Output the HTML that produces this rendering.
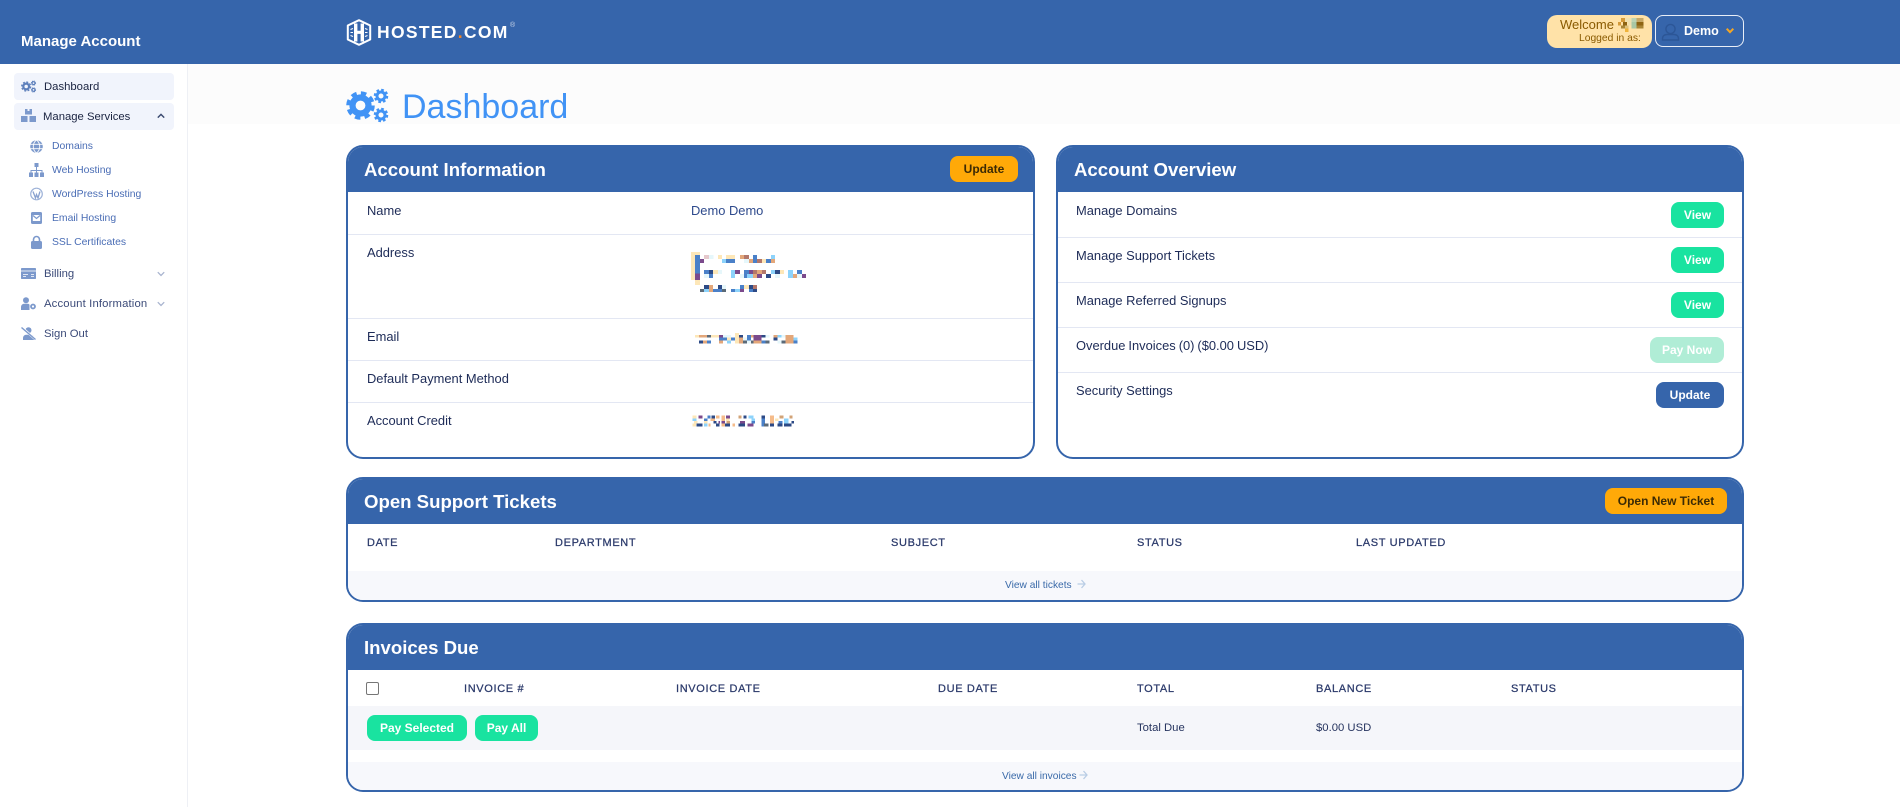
<!DOCTYPE html>
<html lang="en"><head><meta charset="utf-8"><title>Dashboard</title>
<style>
*{box-sizing:border-box;margin:0;padding:0}
html,body{width:1900px;height:807px;overflow:hidden;background:#fff;font-family:"Liberation Sans",sans-serif}
.a{position:absolute}
.t{position:absolute;white-space:nowrap;line-height:16px;margin-top:-7px;font-size:12.9px;color:#1d2b57}
.card{position:absolute;border:2px solid #3665ab;border-radius:17px;background:#fff;overflow:hidden}
.ch{position:absolute;left:-2px;right:-2px;top:-2px;background:#3665ab}
.ct{position:absolute;white-space:nowrap;color:#fff;font-weight:bold;font-size:18.6px;line-height:24px;left:16px;top:10px}
.line{position:absolute;height:1px;background:#e3e7f3}
.btn{position:absolute;border-radius:8px;text-align:center;font-weight:bold;font-size:12px;line-height:26px;height:26px;color:#fff;background:#19e3a0;white-space:nowrap}
.or{background:#ffa908;color:#3b2a05}
.h{font-size:11px;letter-spacing:.65px;color:#2b3a6b}
.hh{font-weight:normal;-webkit-text-stroke:.25px #2b3a6b}
.s1{font-size:11.3px;color:#26345f}
.s2{font-size:10.4px;color:#4a6db5}
.band{position:absolute;background:#f7f8fc;border-radius:0 0 15px 15px}
.ft{font-size:10.2px;color:#3a6aa9}
svg{position:absolute;overflow:visible}
.i{fill:#7c99cc}
</style></head><body>
<svg width="0" height="0" style="position:absolute"><defs>
<g id="gears">
<circle cx="14.500" cy="17.500" r="8" fill="none" stroke="currentColor" stroke-width="6.200"/>
<circle cx="14.500" cy="17.500" r="12.500" fill="none" stroke="currentColor" stroke-width="3.600" stroke-dasharray="5.500 4.320"/>
<circle cx="35" cy="8" r="4" fill="none" stroke="currentColor" stroke-width="3"/>
<circle cx="35" cy="8" r="6" fill="none" stroke="currentColor" stroke-width="2.500" stroke-dasharray="2.600 2.110"/>
<circle cx="35" cy="27" r="4" fill="none" stroke="currentColor" stroke-width="3"/>
<circle cx="35" cy="27" r="6" fill="none" stroke="currentColor" stroke-width="2.500" stroke-dasharray="2.600 2.110"/>
</g></defs></svg>

<!-- top bar -->
<div class="a" style="left:0;top:0;width:1900px;height:64px;background:#3665ab"></div>
<div class="t" style="left:21px;top:41px;color:#fff;font-weight:bold;font-size:15px">Manage Account</div>

<!-- logo -->
<svg style="left:346px;top:19px" width="27" height="27" viewBox="0 0 27 27">
<path d="M13 1.200 24.200 6.500V20.500L13 25.800 1.800 20.500V6.500Z" fill="none" stroke="#fff" stroke-width="2" stroke-linejoin="round"/>
<path d="M8 4.500h3.400v7.200h3.200V4.500H18v18h-3.400v-7.600h-3.200v7.600H8Z" fill="#fff"/>
<path d="M4.500 10.500 7 9.500M4.500 13.500h2.500M4.500 16.500l2.500 1M19 9.500l2.500 1M19 13.500h2.500M19 17.500l2.500-1" stroke="#fff" stroke-width="1.100" fill="none"/>
</svg>
<div class="t" style="left:377px;top:32px;color:#fff;font-size:17.500px;font-weight:bold;letter-spacing:1.300px;line-height:20px;margin-top:-10px">HOSTED<span style="color:#f58220">.</span>COM</div>
<div class="t" style="left:510px;top:25px;color:#cfd9ea;font-size:7px">®</div>

<!-- welcome -->
<div class="a" style="left:1547px;top:15px;width:105px;height:33px;background:#ffe2a8;border-radius:10px"></div>
<div class="t" style="left:1560px;top:24px;color:#8a5a00;font-size:13px">Welcome</div>
<div class="t" style="left:1579px;top:38px;color:#8a5a00;font-size:10.300px">Logged in as:</div>
<svg style="left:1618px;top:18px" width="25.300" height="14" viewBox="0 0 76 42" shape-rendering="crispEdges">
<path d="M9 0h12v12H9zM0 12h9v10H0z" fill="#d49a3a"/><path d="M21 0h20v12H21zM30 12h11v10H30z" fill="#f0e0ae"/><path d="M41 0h15v12H41z" fill="#bcd3b2"/><path d="M41 12h15v20H41z" fill="#a8c7a5"/><path d="M56 0h20v12H56z" fill="#c7a866"/><path d="M56 12h20v10H56zM15 12h12v10H15z" fill="#8e6412"/><path d="M56 22h20v10H56zM9 22h12v10H9z" fill="#a88536"/><path d="M21 22h10v10H21z" fill="#dcc07a"/><path d="M21 32h10v10H21z" fill="#f0b33a"/>
</svg>
<div class="a" style="left:1655px;top:15px;width:89px;height:32px;border:1.500px solid #e8eef8;border-radius:8px"></div>
<svg style="left:1661px;top:23px" width="19" height="18" viewBox="0 0 19 18" fill="none" stroke="#2c5697" stroke-width="1.400">
<circle cx="9.500" cy="6" r="4.600"/><path d="M1.500 17v-1.500c0-2.500 2-4 4.500-4h7c2.500 0 4.500 1.500 4.500 4V17z"/></svg>
<div class="t" style="left:1684px;top:30px;color:#fff;font-weight:bold;font-size:12.500px">Demo</div>
<svg style="left:1726px;top:28px" width="8" height="6" viewBox="0 0 8 6"><path d="M.7.700 4 4.200 7.300.7" fill="none" stroke="#f5a623" stroke-width="2"/></svg>

<!-- sidebar -->
<div class="a" style="left:187px;top:64px;width:1px;height:743px;background:#eef0f5"></div>
<div class="a" style="left:188px;top:64px;width:1712px;height:60px;background:#fcfcfc"></div>
<div class="a" style="left:14px;top:73px;width:160px;height:27px;background:#f1f4fc;border-radius:4px"></div>
<div class="a" style="left:14px;top:103px;width:160px;height:27px;background:#f1f4fc;border-radius:4px"></div>

<svg style="left:21px;top:80px;color:#5d7fbb" width="15" height="13" viewBox="0 0 42 35"><use href="#gears"/></svg>
<div class="t s1" style="left:44px;top:86px;color:#1a2340">Dashboard</div>
<svg style="left:21px;top:109px" width="15" height="13" viewBox="0 0 15 13"><path class="i" d="M4 0h2.500v2h2V0H11v5.500H4zM0 7h6.500v6H0zM8.500 7H15v6H8.500z"/></svg>
<div class="t s1" style="left:43px;top:116px;color:#1a2340">Manage Services</div>
<svg style="left:157px;top:113px" width="8" height="6" viewBox="0 0 8 6"><path d="M.8 4.600 4 1.400 7.200 4.600" fill="none" stroke="#3b4a70" stroke-width="1.500"/></svg>

<svg style="left:30px;top:140px" width="13" height="13" viewBox="0 0 12 12" fill="none"><circle cx="6" cy="6" r="5.800" fill="#7c99cc"/><path d="M0 4h12M0 8h12M6 0c-4 3-4 9 0 12M6 0c4 3 4 9 0 12" stroke="#fff" stroke-width=".8"/></svg>
<div class="t s2" style="left:52px;top:146px">Domains</div>
<svg style="left:29px;top:163px" width="15" height="14" viewBox="0 0 15 14"><path class="i" d="M5.500 0h4v4h-4zM7 4h1v3h5.500v2.500h-1V8h-4.500v1.500H7V8H2.500v1.500h-1V7H7zM0 9.500h4V14H0zM5.500 9.500h4V14h-4zM11 9.500h4V14h-4z"/></svg>
<div class="t s2" style="left:52px;top:170px">Web Hosting</div>
<svg style="left:30px;top:187px" width="13" height="14" viewBox="0 0 13 13"><circle cx="6.500" cy="6.500" r="5.800" fill="none" stroke="#9db2d8" stroke-width="1.200"/><path d="M3 4l2.500 6.500L6.500 7l1.500 3.500L10 4" fill="none" stroke="#8aa2cf" stroke-width="1.300"/></svg>
<div class="t s2" style="left:52px;top:194px">WordPress Hosting</div>
<svg style="left:31px;top:212px" width="11" height="12" viewBox="0 0 11 12"><rect width="11" height="12" rx="1.500" class="i"/><rect x="1.800" y="3" width="7.400" height="6" fill="#fff"/><path d="M2 3.500 5.500 6.500 9 3.500" fill="none" stroke="#7c99cc" stroke-width="1.200"/></svg>
<div class="t s2" style="left:52px;top:218px">Email Hosting</div>
<svg style="left:31px;top:236px" width="11" height="13" viewBox="0 0 11 13"><rect y="5" width="11" height="8" rx="1.500" class="i"/><path d="M2.500 6V3.500a3 3 0 0 1 6 0V6" fill="none" stroke="#7c99cc" stroke-width="1.600"/></svg>
<div class="t s2" style="left:52px;top:242px">SSL Certificates</div>

<svg style="left:21px;top:268px" width="15" height="11" viewBox="0 0 15 11"><rect width="15" height="11" class="i" rx=".8"/><path d="M0 3h15" stroke="#fff" stroke-width=".8"/><path d="M2 6.500h5M2 8.500h3M10 6.500h3M10 8.500h3" stroke="#fff" stroke-width=".8"/></svg>
<div class="t s1" style="left:44px;top:273px;color:#3b4a78">Billing</div>
<svg style="left:157px;top:271px" width="8" height="6" viewBox="0 0 8 6"><path d="M.8 1.200 4 4.400 7.200 1.200" fill="none" stroke="#a8b4cf" stroke-width="1.300"/></svg>
<svg style="left:21px;top:297px" width="15" height="13" viewBox="0 0 15 13"><circle cx="5" cy="3.200" r="3" class="i"/><path class="i" d="M0 13v-3c0-2 1.500-3.300 3.500-3.300h3c1 0 1.500.3 2 1V13z"/><circle cx="12" cy="9.500" r="2" fill="none" stroke="#7c99cc" stroke-width="1.800"/></svg>
<div class="t s1" style="left:44px;top:303px;color:#3b4a78;letter-spacing:.15px">Account Information</div>
<svg style="left:157px;top:301px" width="8" height="6" viewBox="0 0 8 6"><path d="M.8 1.200 4 4.400 7.200 1.200" fill="none" stroke="#a8b4cf" stroke-width="1.300"/></svg>
<svg style="left:21px;top:327px" width="15" height="13" viewBox="0 0 15 13"><circle cx="7.500" cy="3.200" r="3" class="i"/><path class="i" d="M2 13v-2c0-2 1.500-3.300 3.500-3.300h4c2 0 3.500 1.300 3.500 3.300v2z"/><path d="M1 .5 14 12" stroke="#fff" stroke-width="2.400"/><path d="M.5 .5 14.500 12.500" stroke="#7c99cc" stroke-width="1.400"/></svg>
<div class="t s1" style="left:44px;top:333px;color:#3b4a78">Sign Out</div>

<!-- title -->
<svg style="left:346px;top:88px;color:#4193f5" width="42" height="35" viewBox="0 0 42 35"><use href="#gears"/></svg>
<div class="t" style="left:402px;top:107px;font-size:34px;line-height:40px;margin-top:-20px;color:#4193f5">Dashboard</div>

<!-- Account information -->
<div class="card" style="left:346px;top:145px;width:689px;height:314px"><div class="ch" style="height:47px"><div class="ct" style="left:18px;top:13px">Account Information</div></div></div>
<div class="btn or" style="left:950px;top:156px;width:68px">Update</div>
<div class="line" style="left:348px;top:234px;width:685px"></div>
<div class="line" style="left:348px;top:318px;width:685px"></div>
<div class="line" style="left:348px;top:360px;width:685px"></div>
<div class="line" style="left:348px;top:402px;width:685px"></div>
<div class="t" style="left:367px;top:210px">Name</div>
<div class="t" style="left:691px;top:210px;color:#2e4a8c">Demo Demo</div>
<div class="t" style="left:367px;top:252px">Address</div>
<div class="t" style="left:367px;top:336px">Email</div>
<div class="t" style="left:367px;top:378px">Default Payment Method</div>
<div class="t" style="left:367px;top:420px">Account Credit</div>

<!-- pixelated -->
<svg style="left:660px;top:230px" width="200" height="220" viewBox="0 0 600 660" shape-rendering="crispEdges">
<path fill="#fde7b8" d="M93 66h12v84H93zM105 150h15v15h-15zM105 66h15v9h-15zM306 87h12v12h-12zM174 75h12v12h-12zM198 75h27v12h-27zM159 120h15v12h-15zM360 120h12v12h-12zM252 165h15v12h-15zM105 315h12v8h-12zM153 315h24v8h-24zM225 309h12v31h-12zM201 323h12v8h-12z"/>
<path fill="#4a80c8" d="M105 75h15v55h-15zM198 87h15v12h-15zM213 87h12v12h-12zM318 87h15v12h-15zM279 75h12v24h-12zM132 120h15v12h-15zM252 120h15v24h-15zM147 132h12v12h-12zM411 120h15v12h-15zM240 165h12v12h-12zM159 177h27v9h-27zM213 177h12v9h-12zM267 177h12v9h-12zM177 323h24v8h-24zM261 315h12v8h-12zM293 323h12v8h-12zM305 331h12v9h-12zM213 323h12v8h-12zM141 331h12v9h-12zM401 331h12v9h-12zM261 323h12v8h-12z"/>
<path fill="#8dd3fb" d="M333 75h12v12h-12zM186 87h12v12h-12zM213 120h12v24h-12zM333 120h12v12h-12zM384 120h15v24h-15zM267 132h12v12h-12zM132 177h15v9h-15zM225 177h15v9h-15zM353 315h12v8h-12zM201 331h12v9h-12zM401 323h12v8h-12zM261 132h6v12h-6z"/>
<path fill="#7b4a8c" d="M105 130h15v20h-15zM120 87h12v12h-12zM225 120h15v12h-15zM267 120h12v12h-12zM291 132h15v12h-15zM426 132h12v12h-12zM240 177h12v9h-12zM177 315h12v8h-12zM281 315h24v16h-24zM389 315h12v8h-12z"/>
<path fill="#e3a77a" d="M240 75h12v12h-12zM291 120h15v12h-15zM147 165h12v21h-12zM267 87h12v12h-12zM333 87h12v12h-12zM279 132h12v12h-12zM399 132h12v12h-12zM117 315h24v8h-24zM237 323h12v17h-12zM273 315h8v8h-8zM281 331h24v9h-24zM341 315h12v8h-12zM377 315h24v25h-24zM129 331h12v9h-12zM177 331h12v9h-12z"/>
<path fill="#b3776a" d="M252 75h15v12h-15zM291 87h15v12h-15zM279 120h12v12h-12zM306 120h12v12h-12zM279 165h12v12h-12z"/>
<path fill="#2d4a86" d="M147 120h12v12h-12zM318 132h15v12h-15zM345 120h15v12h-15zM132 165h15v12h-15zM174 165h12v12h-12zM267 165h12v12h-12zM279 177h12v9h-12zM237 315h12v8h-12zM305 315h12v8h-12zM341 323h12v8h-12zM117 331h12v9h-12z"/>
<path fill="#e6f7fb" d="M147 75h13v12h-13zM252 87h15v12h-15zM174 120h12v12h-12zM132 132h15v12h-15zM240 132h12v12h-12zM345 132h15v12h-15zM411 132h15v12h-15zM186 165h12v12h-12zM189 315h24v8h-24zM317 315h12v8h-12zM365 315h12v8h-12zM249 323h12v8h-12zM353 331h12v9h-12zM261 331h12v9h-12z"/>
<path fill="#e5c8cc" d="M132 75h15v12h-15z"/>
<path fill="#5b6a78" d="M120 177h12v9h-12zM186 177h12v9h-12zM141 315h12v8h-12zM249 331h12v9h-12zM273 331h8v9h-8zM317 331h12v9h-12zM365 331h12v9h-12z"/>
</svg>
<!-- credit pixels -->
<svg style="left:690px;top:410px" width="110" height="22" viewBox="0 0 330 66" shape-rendering="crispEdges">
<path fill="#fde7b8" d="M8 17h12v8H8zM12 33h10v8H12zM8 41h10v9H8zM42 33h10v8H42zM255 25h10v8h-10zM108 25h10v8h-10z"/>
<path fill="#8dd3fb" d="M8 25h12v8H8zM42 41h10v9H42zM175 17h15v8h-15zM185 25h10v8h-10zM282 25h13v16h-13z"/>
<path fill="#7b4a8c" d="M25 17h13v8H25zM108 17h12v8h-12zM85 33h5v8h-5zM95 33h10v8H95zM150 33h15v8h-15zM172 41h18v9h-18z"/>
<path fill="#4a80c8" d="M42 25h10v8H42zM52 17h10v8H52zM185 33h10v8h-10zM215 25h10v25h-10zM265 33h13v8h-13z"/>
<path fill="#2d4a86" d="M20 41h18v9H20zM65 17h10v8H65zM70 33h10v8H70zM78 41h10v9H78zM105 41h15v9h-15zM145 41h20v9h-20zM160 17h10v8h-10zM215 17h10v8h-10zM240 41h12v9h-12zM262 41h16v9h-16zM282 41h23v9h-23zM305 33h7v8h-7z"/>
<path fill="#f5bb8a" d="M78 17h10v8H78zM95 17h10v16H95zM62 25h13v8H62zM95 41h10v9H95zM55 41h7v9h-7zM128 41h7v9h-7zM240 17h12v24h-12z"/>
<path fill="#d2a377" d="M110 33h10v8h-10zM145 17h10v8h-10zM268 17h12v8h-12zM298 17h10v8h-10z"/>
<path fill="#5b6a78" d="M222 41h14v9h-14z"/>
</svg>

<!-- Account overview -->
<div class="card" style="left:1056px;top:145px;width:688px;height:314px"><div class="ch" style="height:47px"><div class="ct" style="left:18px;top:13px">Account Overview</div></div></div>
<div class="line" style="left:1058px;top:237px;width:684px"></div>
<div class="line" style="left:1058px;top:282px;width:684px"></div>
<div class="line" style="left:1058px;top:327px;width:684px"></div>
<div class="line" style="left:1058px;top:372px;width:684px"></div>
<div class="t" style="left:1076px;top:210px">Manage Domains</div>
<div class="t" style="left:1076px;top:255px">Manage Support Tickets</div>
<div class="t" style="left:1076px;top:300px">Manage Referred Signups</div>
<div class="t" style="left:1076px;top:345px;word-spacing:-.6px">Overdue Invoices (0)&nbsp;($0.00 USD)</div>
<div class="t" style="left:1076px;top:390px">Security Settings</div>
<div class="btn" style="left:1671px;top:202px;width:53px">View</div>
<div class="btn" style="left:1671px;top:247px;width:53px">View</div>
<div class="btn" style="left:1671px;top:292px;width:53px">View</div>
<div class="btn" style="left:1650px;top:337px;width:74px;background:#b0edd6">Pay Now</div>
<div class="btn" style="left:1656px;top:382px;width:68px;background:#3665ab">Update</div>

<!-- Tickets -->
<div class="card" style="left:346px;top:477px;width:1398px;height:125px"><div class="ch" style="height:47px"><div class="ct" style="left:18px;top:13px">Open Support Tickets</div></div></div>
<div class="btn or" style="left:1605px;top:488px;width:122px;height:26px">Open New Ticket</div>
<div class="t h hh" style="left:367px;top:542px">DATE</div>
<div class="t h hh" style="left:555px;top:542px">DEPARTMENT</div>
<div class="t h hh" style="left:891px;top:542px">SUBJECT</div>
<div class="t h hh" style="left:1137px;top:542px">STATUS</div>
<div class="t h hh" style="left:1356px;top:542px">LAST UPDATED</div>
<div class="band" style="left:348px;top:571px;width:1394px;height:29px"></div>
<div class="t ft" style="left:1005px;top:585px">View all tickets</div>
<svg style="left:1077px;top:579px" width="9" height="10" viewBox="0 0 9 10"><path d="M.5 5h7.500M4.500 1 8 5 4.500 9" fill="none" stroke="#b9cde5" stroke-width="1.300"/></svg>

<!-- Invoices -->
<div class="card" style="left:346px;top:623px;width:1398px;height:169px"><div class="ch" style="height:47px"><div class="ct" style="left:18px;top:13px">Invoices Due</div></div></div>
<div class="a" style="left:366px;top:682px;width:13px;height:13px;border:1px solid #767676;border-radius:2px;background:#fff"></div>
<div class="t h hh" style="left:464px;top:688px">INVOICE #</div>
<div class="t h hh" style="left:676px;top:688px">INVOICE DATE</div>
<div class="t h hh" style="left:938px;top:688px">DUE DATE</div>
<div class="t h hh" style="left:1137px;top:688px">TOTAL</div>
<div class="t h hh" style="left:1316px;top:688px">BALANCE</div>
<div class="t h hh" style="left:1511px;top:688px">STATUS</div>
<div class="a" style="left:348px;top:706px;width:1394px;height:44px;background:#f5f6fa"></div>
<div class="btn" style="left:367px;top:715px;width:100px">Pay Selected</div>
<div class="btn" style="left:475px;top:715px;width:63px">Pay All</div>
<div class="t s1" style="left:1137px;top:727px">Total Due</div>
<div class="t s1" style="left:1316px;top:727px">$0.00 USD</div>
<div class="band" style="left:348px;top:762px;width:1394px;height:28px"></div>
<div class="t ft" style="left:1002px;top:776px">View all invoices</div>
<svg style="left:1079px;top:770px" width="9" height="10" viewBox="0 0 9 10"><path d="M.5 5h7.500M4.500 1 8 5 4.500 9" fill="none" stroke="#b9cde5" stroke-width="1.300"/></svg>
</body></html>
